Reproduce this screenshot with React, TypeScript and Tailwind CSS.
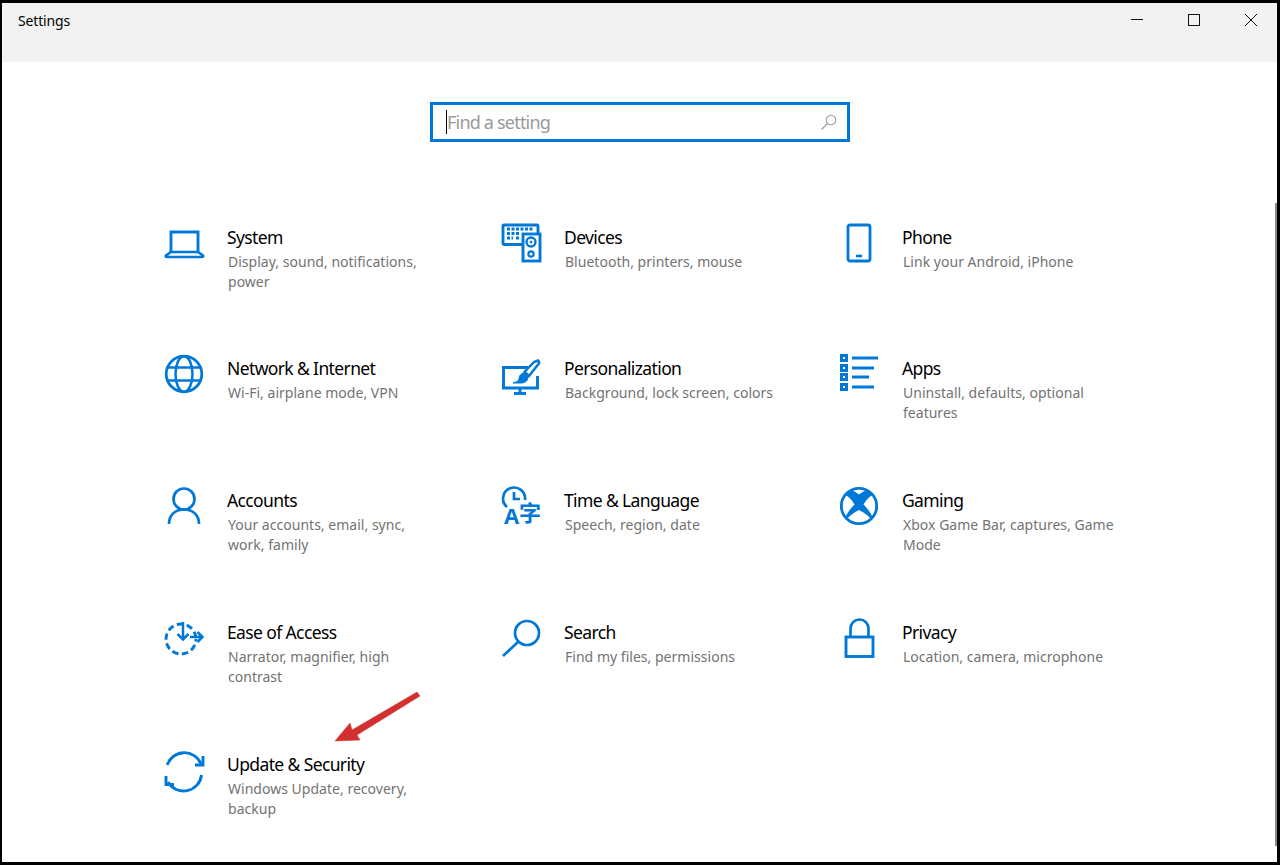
import type { ReactNode } from "react";

const Icon = ({ children }: { children: ReactNode }) => (
  <svg
    width="44"
    height="44"
    viewBox="0 0 44 44"
    fill="none"
    stroke="#0078d7"
    strokeWidth="2.4"
    className="shrink-0 overflow-visible"
  >
    {children}
  </svg>
);

const items: { title: string; sub: string; icon: ReactNode }[] = [
  {
    title: "System",
    sub: "Display, sound, notifications,\npower",
    icon: (
      <>
        <path d="M7 32V12H34V32" strokeWidth="2.9" />
        <path d="M7 32L2 35.5Q1 37 3 37H38Q40 37 39 35.5L34 32Z" strokeWidth="2.5" />
      </>
    ),
  },
  {
    title: "Devices",
    sub: "Bluetooth, printers, mouse",
    icon: (
      <>
        <path d="M21 24.5H3Q2 24.5 2 23.5V6Q2 5 3 5H36Q37 5 37 6V14" strokeWidth="2.9" />
        <path d="M6 9H33M6 13.5H19M6 18H12M15 18H19" strokeWidth="3" strokeDasharray="3 1.5" />
        <rect x="22" y="14" width="17" height="27" strokeWidth="2.9" />
        <circle cx="30" cy="22" r="4.5" strokeWidth="2.4" />
        <circle cx="30" cy="22" r="1" fill="#0078d7" strokeWidth="1" />
        <circle cx="30" cy="34" r="2.6" strokeWidth="2.2" />
      </>
    ),
  },
  {
    title: "Phone",
    sub: "Link your Android, iPhone",
    icon: (
      <>
        <rect x="9" y="5" width="22" height="36" rx="2" strokeWidth="2.8" />
        <path d="M17 36H23" strokeWidth="2.6" />
      </>
    ),
  },
  {
    title: "Network & Internet",
    sub: "Wi-Fi, airplane mode, VPN",
    icon: (
      <>
        <circle cx="20" cy="23" r="17.8" strokeWidth="2.8" />
        <ellipse cx="20" cy="23" rx="8.5" ry="17.8" strokeWidth="2.5" />
        <path d="M3.5 16.5H36.5M3.5 29.5H36.5" strokeWidth="2.5" />
      </>
    ),
  },
  {
    title: "Personalization",
    sub: "Background, lock screen, colors",
    icon: (
      <>
        <path d="M36.5 25V37H2.5V16.5H27" strokeWidth="2.9" />
        <path d="M19 37V42M13 42.5H25" strokeWidth="2.8" />
        <path d="M37 9.5Q39 11 37.5 13L28 25L23.5 21L33 11Z" strokeWidth="2.5" />
        <path d="M23 22Q18 23 18 28Q17.5 31 12 32H21Q27 31 27 26Z" fill="#0078d7" strokeWidth="1" />
      </>
    ),
  },
  {
    title: "Apps",
    sub: "Uninstall, defaults, optional\nfeatures",
    icon: (
      <>
        {[4, 14, 23, 33].map((y) => (
          <rect key={y} x="2.5" y={y + 0.5} width="5" height="5" strokeWidth="3" />
        ))}
        <path d="M13 7H39M13 17H35M13 26H30M13 36H35" strokeWidth="2.8" />
      </>
    ),
  },
  {
    title: "Accounts",
    sub: "Your accounts, email, sync,\nwork, family",
    icon: (
      <>
        <circle cx="20" cy="16" r="10.5" strokeWidth="2.7" />
        <path d="M5 41C5 32 11 26.5 20 26.5C29 26.5 35 32 35 41" strokeWidth="2.7" />
      </>
    ),
  },
  {
    title: "Time & Language",
    sub: "Speech, region, date",
    icon: (
      <>
        <path d="M6 24A11 11 0 1 1 24 17" strokeWidth="2.7" />
        <path d="M13 9V16H19" strokeWidth="2.7" />
        <text
          x="3"
          y="41"
          fill="#0078d7"
          stroke="none"
          fontSize="22"
          fontWeight="700"
          fontFamily='"Open Sans", sans-serif'
        >
          A
        </text>
        <text
          x="18"
          y="38"
          fill="#0078d7"
          stroke="none"
          fontSize="22"
          fontWeight="700"
          fontFamily='"Noto Sans CJK SC", sans-serif'
        >
          字
        </text>
      </>
    ),
  },
  {
    title: "Gaming",
    sub: "Xbox Game Bar, captures, Game\nMode",
    icon: (
      <>
        <circle cx="20" cy="23" r="18" fill="#0078d7" stroke="none" />
        <path d="M11 7Q20 3 29 7Q23.5 8 20 11.5Q16.5 8 11 7Z" fill="white" stroke="none" />
        <path d="M6.5 12Q12 15 15.5 21.5Q9 28 6.5 34Q0 23 6.5 12Z" fill="white" stroke="none" />
        <path d="M33.5 12Q28 15 24.5 21.5Q31 28 33.5 34Q40 23 33.5 12Z" fill="white" stroke="none" />
        <path d="M20 27Q12 31 7.5 36.5Q20 47 32.5 36.5Q28 31 20 27Z" fill="white" stroke="none" />
        <circle cx="20" cy="23" r="17.7" strokeWidth="2.8" />
      </>
    ),
  },
  {
    title: "Ease of Access",
    sub: "Narrator, magnifier, high\ncontrast",
    icon: (
      <>
        <circle cx="17" cy="24" r="15" strokeWidth="2.9" strokeDasharray="6.5 3.5" strokeDashoffset="4" />
        <path d="M19 7V24M13.5 19L19 24.5L24.5 19" strokeWidth="2.5" />
        <path d="M26 22H38M33.5 17L38.5 22L33.5 27" strokeWidth="2.5" />
      </>
    ),
  },
  {
    title: "Search",
    sub: "Find my files, permissions",
    icon: (
      <>
        <circle cx="26" cy="18" r="12" strokeWidth="2.7" />
        <path d="M17.5 26.5L2 41" strokeWidth="2.7" />
      </>
    ),
  },
  {
    title: "Privacy",
    sub: "Location, camera, microphone",
    icon: (
      <>
        <rect x="7" y="22" width="27" height="19.5" strokeWidth="2.9" />
        <path d="M11.5 22V13.5A9 9 0 0 1 29.5 13.5V22" strokeWidth="2.7" />
      </>
    ),
  },
  {
    title: "Update & Security",
    sub: "Windows Update, recovery,\nbackup",
    icon: (
      <>
        <path d="M3.2 18A18 18 0 0 1 37 17" strokeWidth="2.9" />
        <path d="M39 9V18H31" strokeWidth="2.9" />
        <path d="M37.5 28A18 18 0 0 1 4 35" strokeWidth="2.9" />
        <path d="M2 29V37.5H10" strokeWidth="2.9" />
      </>
    ),
  },
];

export default function App() {
  return (
    <div
      className="relative flex h-[865px] w-[1280px] flex-col overflow-hidden border-t-[3px] border-r-[3px] border-b-[3px] border-l-2 border-black bg-white"
      style={{ fontFamily: '"Noto Sans", "Open Sans", sans-serif' }}
    >
      {/* title bar */}
      <div className="flex h-[59px] shrink-0 items-start justify-between bg-[#f2f2f2]">
        <div className="mt-[8px] ml-[16px] text-[14px] leading-5 tracking-[-0.15px] text-black">Settings</div>
        <div className="mr-[20px] flex gap-[45px] pt-[11px]">
          <svg width="12" height="12" viewBox="0 0 12 12" fill="none" stroke="#111" strokeWidth="1">
            <path d="M0 5.5H12" />
          </svg>
          <svg width="12" height="12" viewBox="0 0 12 12" fill="none" stroke="#111" strokeWidth="1">
            <rect x="0.5" y="0.5" width="11" height="11" />
          </svg>
          <svg width="12" height="12" viewBox="0 0 12 12" fill="none" stroke="#111" strokeWidth="1">
            <path d="M0 0L12 12M12 0L0 12" />
          </svg>
        </div>
      </div>

      {/* search */}
      <div className="mt-[40px] ml-[428px] flex h-[40px] w-[420px] items-center border-[3px] border-[#0078d7] pr-[10px] pl-[13px]">
        <div className="h-[24px] w-px shrink-0 bg-black" />
        <span className="flex-1 text-[18px] tracking-[-0.8px] text-[#9a9a9a]">Find a setting</span>
        <svg width="16" height="16" viewBox="0 0 16 16" fill="none" stroke="#9a9a9a" strokeWidth="1.1">
          <circle cx="10" cy="6" r="4.8" />
          <path d="M6.5 9.5L0.5 15.5" />
        </svg>
      </div>

      {/* settings grid */}
      <div className="mt-[78px] ml-[162px] grid grid-cols-[337px_338px_338px] grid-rows-[131px_132px_132px_132px_100px]">
        {items.map((item) => (
          <div key={item.title} className="flex">
            <div className="w-[63px] shrink-0">
              <Icon>{item.icon}</Icon>
            </div>
            <div>
              <div className="mt-[5px] text-[17.5px] leading-6 tracking-[-0.62px] text-black">{item.title}</div>
              <div className="mt-[3px] ml-px text-[14px] leading-5 tracking-[0.02px] whitespace-pre-line text-[#737373]">
                {item.sub}
              </div>
            </div>
          </div>
        ))}
      </div>

      {/* scrollbar */}
      <div className="absolute top-[200px] right-0 h-[643px] w-[2px] bg-[#8a8a8a]" />

      {/* red arrow annotation */}
      <svg className="absolute top-[685px] left-[328px]" width="95" height="62" viewBox="0 0 95 62">
        <path
          d="M5 53L20 35L22 42L87 4L90 8L27 47L30 52Z"
          fill="#d32f2f"
          stroke="#d32f2f"
          strokeWidth="0.5"
          strokeLinejoin="round"
        />
      </svg>
    </div>
  );
}
